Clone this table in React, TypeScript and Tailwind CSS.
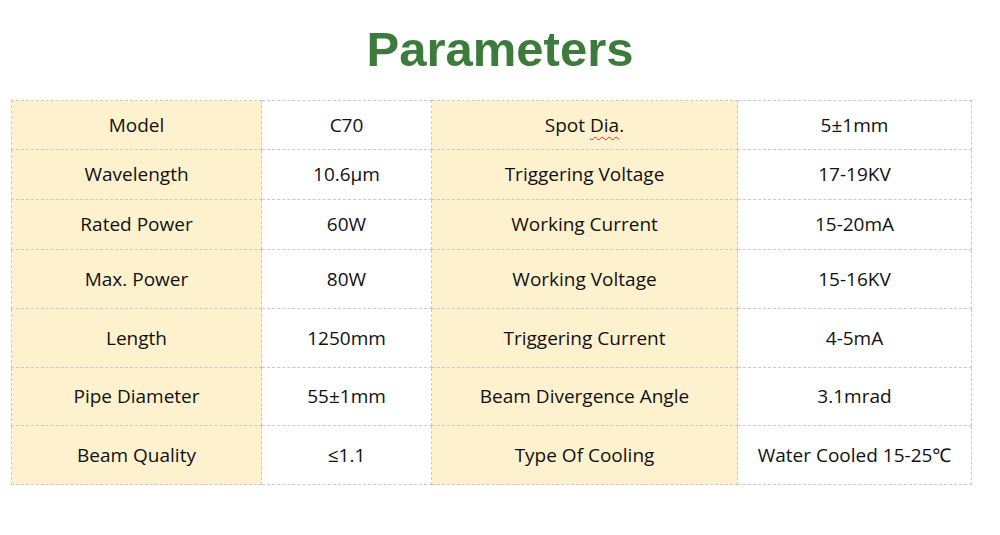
const rows: { a: string; b: string; c: string; d: string; h: string }[] = [
  { a: 'Model', b: 'C70', c: 'spot', d: '5±1mm', h: 'h-[49px]' },
  { a: 'Wavelength', b: '10.6μm', c: 'Triggering Voltage', d: '17-19KV', h: 'h-[50px]' },
  { a: 'Rated Power', b: '60W', c: 'Working Current', d: '15-20mA', h: 'h-[50px]' },
  { a: 'Max. Power', b: '80W', c: 'Working Voltage', d: '15-16KV', h: 'h-[59px]' },
  { a: 'Length', b: '1250mm', c: 'Triggering Current', d: '4-5mA', h: 'h-[59px]' },
  { a: 'Pipe Diameter', b: '55±1mm', c: 'Beam Divergence Angle', d: '3.1mrad', h: 'h-[58px]' },
  { a: 'Beam Quality', b: '≤1.1', c: 'Type Of Cooling', d: 'Water Cooled 15-25℃', h: 'h-[59px]' },
];

export default function App() {
  return (
    <div className="w-[1000px] h-[535px] bg-white overflow-hidden">
      {/* Title */}
      <h1 className="text-center pt-[20px] h-[100px] text-[49px] leading-[58px] font-bold text-[#3c7b3c] font-['Liberation_Sans',Arial,sans-serif]">
        Parameters
      </h1>

      {/* Spec table */}
      <table className="ml-[11px] w-[960px] border-collapse table-fixed text-[19px] text-[#111] font-['Open_Sans','Noto_Sans',sans-serif]">
        <colgroup>
          <col className="w-[250px]" />
          <col className="w-[170px]" />
          <col className="w-[306px]" />
          <col className="w-[234px]" />
        </colgroup>
        <tbody>
          {rows.map((r) => (
            <tr key={r.a} className={r.h}>
              <td className="border border-dashed border-[#c9c9c9] bg-[#fef1cd] text-center p-0">{r.a}</td>
              <td className="border border-dashed border-[#c9c9c9] bg-white text-center p-0">{r.b}</td>
              <td className="border border-dashed border-[#c9c9c9] bg-[#fef1cd] text-center p-0">
                {r.c === 'spot' ? (
                  <>
                    Spot <span className="underline decoration-wavy decoration-[#e03030] decoration-1 underline-offset-4">Dia</span>.
                  </>
                ) : (
                  r.c
                )}
              </td>
              <td className="border border-dashed border-[#c9c9c9] bg-white text-center p-0">{r.d}</td>
            </tr>
          ))}
        </tbody>
      </table>
    </div>
  );
}
